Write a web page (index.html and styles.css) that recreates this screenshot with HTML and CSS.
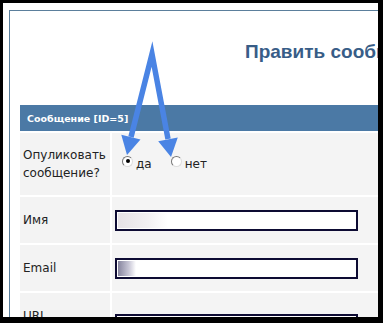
FILE: index.html
```html
<!DOCTYPE html>
<html>

<head>
    <title>Править сообщение</title>
    <meta charset="utf-8">
    <link rel="stylesheet" href="styles.css">
</head>

<body>
    <div class="frame">
        <div class="page">
            <h1 class="titel">Править сообщение</h1>

            <div class="form">
                <div class="hoved">Сообщение [ID=5]</div>

                <div class="label">Опуликовать сообщение?</div>
                <div class="felt">
                    <span class="radio valgt"></span><span class="valg">да</span>
                    <span class="radio"></span><span class="valg">нет</span>
                </div>

                <div class="label">Имя</div>
                <div class="felt">
                    <div class="input"><span class="sloer navn"></span></div>
                </div>

                <div class="label">Email</div>
                <div class="felt">
                    <div class="input"><span class="sloer mail"></span></div>
                </div>

                <div class="label">URL</div>
                <div class="felt top">
                    <div class="input"></div>
                </div>
            </div>
        </div>
    </div>

    <svg class="pile" width="383" height="323" viewBox="0 0 383 323">
        <polyline points="131,137 152,54 168,139" fill="none" stroke="#4a84e4" stroke-width="5.5" stroke-linejoin="miter" stroke-miterlimit="10" />
        <polygon points="127,155 140.5,139.5 121.3,134.8" fill="#4a84e4" />
        <polygon points="171,157 177.8,137.4 158.2,141.2" fill="#4a84e4" />
    </svg>
</body></html>
```

FILE: styles.css
```css
body {
    margin: 0;
    padding: 3px 5px 6px 3px;
    background-color: #000;
    position: relative;
    width: 383px;
    height: 323px;
    box-sizing: border-box;
    overflow: hidden;
}

.frame {
    background-color: #fff;
    height: 100%;
    overflow: hidden;
    padding: 7px 0 0 6px;
    box-sizing: border-box;
}

.page {
    border-top: 1px solid #5b7f9c;
    border-left: 1px solid #5b7f9c;
    width: 700px;
    padding: 30px 0 0 10px;
    height: 400px;
}

.titel {
    margin: 0 0 42px 0;
    padding-left: 225px;
    font-family: "Liberation Sans", Arial, sans-serif;
    font-size: 19px;
    line-height: 22px;
    color: #385d87;
    white-space: nowrap;
}

/* FORM */

.form {
    display: grid;
    grid-template-columns: 90px 1fr;
    grid-auto-rows: 46px;
    grid-template-rows: 26px 62px;
    gap: 2px;
    font-family: "DejaVu Sans", Verdana, sans-serif;
    font-size: 12px;
    color: #222;
}

.hoved {
    grid-column: 1 / 3;
    background-color: #4b79a5;
    color: #fff;
    font-weight: bold;
    font-size: 9.5px;
    display: flex;
    align-items: center;
    padding-left: 7px;
}

.label {
    background-color: #f3f3f3;
    display: flex;
    align-items: center;
    padding-left: 3px;
    line-height: 18px;
}

.felt {
    background-color: #f4f4f4;
    display: flex;
    align-items: center;
    padding-left: 3px;
}

.felt.top {
    align-items: flex-start;
    padding-top: 21px;
}

.radio {
    width: 9px;
    height: 9px;
    border-radius: 50%;
    border: 1px solid;
    border-color: #777 #ddd #ddd #777;
    background-color: #fff;
    margin: -6px 3px 0 7px;
    display: flex;
    align-items: center;
    justify-content: center;
}

.radio.valgt::after {
    content: "";
    width: 4px;
    height: 4px;
    border-radius: 50%;
    background-color: #000;
}

.valg {
    margin-right: 12px;
}

.input {
    width: 239px;
    height: 17px;
    border: 2px solid #0d0b33;
    background-color: #fff;
    display: flex;
    align-items: center;
}

.sloer {
    height: 15px;
    margin-left: 1px;
}

.navn {
    width: 50px;
    background: linear-gradient(to right, #e6e2e6, #f2f0f2 60%, #fff);
}

.mail {
    width: 18px;
    background: linear-gradient(to right, #86849e, #c8c6d6 60%, #fff);
}

.pile {
    position: absolute;
    top: 0;
    left: 0;
}
```
